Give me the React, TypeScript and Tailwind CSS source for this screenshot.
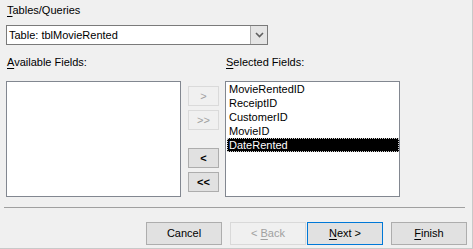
import React from "react";

const font = { fontFamily: '"Liberation Sans", Arial, sans-serif' };

function U({ c }: { c: string }) {
  return <span className="underline underline-offset-[2px] decoration-[1px]">{c}</span>;
}

function SmallBtn({ label, disabled }: { label: string; disabled?: boolean }) {
  return (
    <div
      className={
        "w-[31px] h-[20px] flex items-center justify-center text-[11px] leading-none border " +
        (disabled
          ? "border-[#dadada] bg-[#f0f0f0] text-[#a0a0a0]"
          : "border-[#adadad] bg-[#e1e1e1] text-black font-semibold")
      }
    >
      {label}
    </div>
  );
}

function WizBtn({ children, kind }: { children: React.ReactNode; kind?: "disabled" | "default" }) {
  let cls = "border-[#adadad] bg-[#e1e1e1] text-black";
  if (kind === "disabled") cls = "border-[#d9d9d9] bg-[#f0f0f0] text-[#a0a0a0]";
  if (kind === "default") cls = "border-[#0078d7] bg-[#e1e1e1] text-black";
  return (
    <div className={"w-[76px] h-[23px] flex items-center justify-center text-[11px] border " + cls}>
      {children}
    </div>
  );
}

export default function App() {
  const fields = ["MovieRentedID", "ReceiptID", "CustomerID", "MovieID", "DateRented"];
  return (
    <div
      style={font}
      className="w-[473px] h-[249px] bg-[#f0f0f0] border-r border-b border-[#c9c9c9] flex flex-col text-[11px] text-black overflow-hidden"
    >
      <div className="pl-[7px] pt-[4px] h-[19px] leading-[13px]">
        <U c="T" />ables/Queries
      </div>
      <div className="ml-[6px] mt-[6px] w-[262px] h-[20px] flex border border-[#7a7a7a] bg-white">
        <div className="flex-1 flex items-center pl-[2px] leading-[13px]">Table: tblMovieRented</div>
        <div className="w-[17px] h-full bg-[#e5e5e5] border-l border-[#acacac] flex items-center justify-center">
          <svg width="9" height="6" viewBox="0 0 9 6">
            <path d="M1 1 L4.5 4.5 L8 1" stroke="#606060" strokeWidth="1.6" fill="none" />
          </svg>
        </div>
      </div>
      <div className="flex mt-[11px] h-[13px] leading-[13px]">
        <div className="pl-[7px] w-[226px]">
          <U c="A" />vailable Fields:
        </div>
        <div>
          <U c="S" />elected Fields:
        </div>
      </div>
      <div className="flex mt-[12px] pl-[6px]">
        <div className="w-[175px] h-[116px] bg-white border border-[#828790]" />
        <div className="ml-[7px] w-[31px] flex flex-col pt-[5px] gap-[4px]">
          <SmallBtn label=">" disabled />
          <SmallBtn label=">>" disabled />
          <div className="h-[10px]" />
          <SmallBtn label="<" />
          <SmallBtn label="<<" />
        </div>
        <div className="ml-[6px] w-[175px] h-[116px] bg-white border border-[#828790] pl-[1px]">
          {fields.map((f, i) => (
            <div
              key={f}
              className={
                "h-[14px] leading-[14px] pl-[2px] " +
                (i === 4 ? "bg-black text-white outline outline-1 outline-dotted outline-[#d0d0d0] -outline-offset-1" : "")
              }
            >
              {f}
            </div>
          ))}
        </div>
      </div>
      <div className="ml-[4px] mt-[10px] w-[461px] h-[1px] bg-[#a0a0a0]" />
      <div className="flex mt-[14px] pl-[146px]">
        <WizBtn>Cancel</WizBtn>
        <div className="w-[8px]" />
        <WizBtn kind="disabled">
          &lt;&nbsp;<U c="B" />ack
        </WizBtn>
        <div className="w-[1px]" />
        <WizBtn kind="default">
          <U c="N" />ext &gt;
        </WizBtn>
        <div className="w-[8px]" />
        <WizBtn>
          <U c="F" />inish
        </WizBtn>
      </div>
    </div>
  );
}
